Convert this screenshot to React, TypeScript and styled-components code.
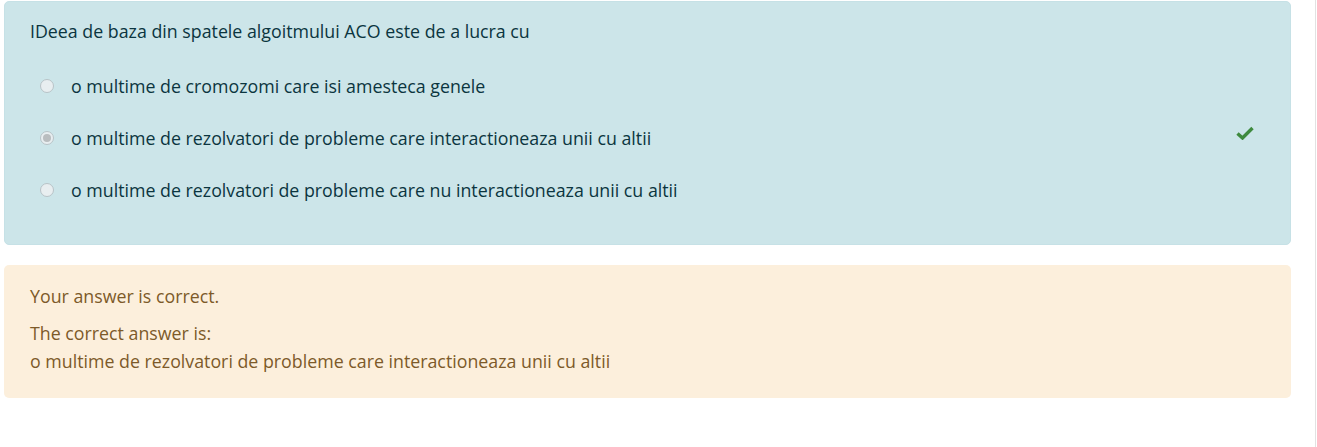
import styled, { createGlobalStyle } from "styled-components";

const GlobalStyle = createGlobalStyle`
  html, body {
    margin: 0;
    padding: 0;
    background: #fff;
  }
  body {
    font-family: "Open Sans", "Noto Sans", sans-serif;
  }
`;

const Page = styled.div`
  width: 1316px;
  height: 447px;
  box-sizing: border-box;
  border-right: 1px solid #e2e2e2;
  padding: 1px 24px 0 4px;
  display: flex;
  flex-direction: column;
  gap: 20px;
`;

const Formulation = styled.div`
  position: relative;
  background: #cce5e9;
  border: 1px solid #c6e1e6;
  border-radius: 5px;
  color: #0b3540;
  font-size: 17.8px;
  line-height: 28px;
  padding: 15px 25px 40px;
`;

const QText = styled.div`
  margin-bottom: 27px;
`;

const Answers = styled.div`
  display: flex;
  flex-direction: column;
  gap: 24px;
  padding-left: 10px;
`;

const Option = styled.div`
  display: flex;
  align-items: center;
  gap: 17px;
  height: 28px;
`;

const Radio = styled.span<{ checked?: boolean }>`
  width: 14px;
  height: 14px;
  border-radius: 50%;
  box-sizing: border-box;
  border: 1px solid #b8c3c7;
  background: #e8eef0;
  display: flex;
  align-items: center;
  justify-content: center;
  flex-shrink: 0;
  &::after {
    content: "";
    display: ${(p) => (p.checked ? "block" : "none")};
    width: 8px;
    height: 8px;
    border-radius: 50%;
    background: #b9bdbf;
  }
`;

const Tick = styled.svg`
  position: absolute;
  right: 36px;
  top: 124px;
`;

const Outcome = styled.div`
  background: #fcefdc;
  border-radius: 5px;
  color: #7d5a29;
  font-size: 17.8px;
  line-height: 28px;
  padding: 17px 26px 23px;
`;

const Para = styled.p<{ gap?: number }>`
  margin: 0 0 ${(p) => p.gap ?? 0}px;
`;

const options = [
  { text: "o multime de cromozomi care isi amesteca genele", checked: false },
  { text: "o multime de rezolvatori de probleme care interactioneaza unii cu altii", checked: true },
  { text: "o multime de rezolvatori de probleme care nu interactioneaza unii cu altii", checked: false },
];

export default function App() {
  return (
    <>
      <GlobalStyle />
      <Page>
        <Formulation>
          <QText>IDeea de baza din spatele algoitmului ACO este de a lucra cu</QText>
          <Answers>
            {options.map((o) => (
              <Option key={o.text}>
                <Radio checked={o.checked} />
                <span>{o.text}</span>
              </Option>
            ))}
          </Answers>
          <Tick width="18" height="14" viewBox="0 0 18 14">
            <path d="M1.5 7.5 L6.5 12 L16.5 2" fill="none" stroke="#3e8a3e" strokeWidth="3.4" strokeLinecap="butt" strokeLinejoin="miter" />
          </Tick>
        </Formulation>
        <Outcome>
          <Para gap={9}>Your answer is correct.</Para>
          <Para>The correct answer is:</Para>
          <Para>o multime de rezolvatori de probleme care interactioneaza unii cu altii</Para>
        </Outcome>
      </Page>
    </>
  );
}
